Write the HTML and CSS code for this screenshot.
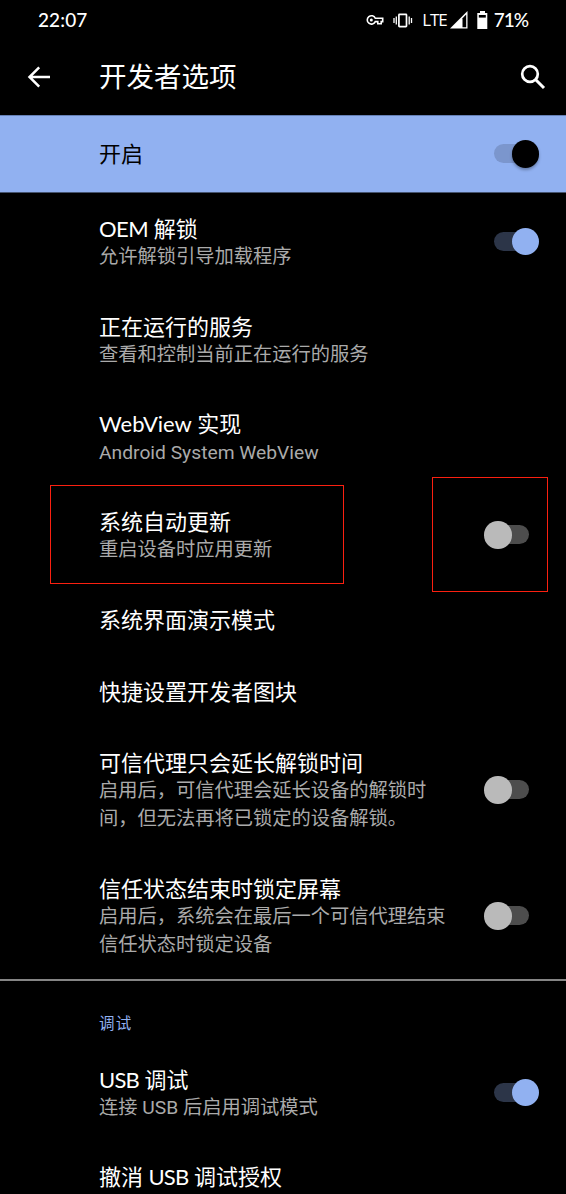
FILE: index.html
```html
<!DOCTYPE html>
<html lang="zh-CN">
<head>
<meta charset="utf-8">
<title>开发者选项</title>
<link rel="stylesheet" href="styles.css">
</head>
<body>
<div class="screen">
  <header class="status">
    <span class="clock">22:07</span>
    <div class="status-icons">
      <svg class="key" width="18" height="12" viewBox="0 0 18 12"><path d="M9.3 4.2A4.2 4.2 0 1 0 9.3 7.6H11.8V9.7H15.2V7.6H16.7V4.2Z" fill="none" stroke="#fff" stroke-width="1.6"/><circle cx="5.3" cy="5.9" r="1.5" fill="#fff"/></svg>
      <svg class="vibrate" width="20" height="15" viewBox="0 0 20 15"><rect x="5.9" y="1.4" width="7.6" height="12.2" rx=".6" fill="none" stroke="#fff" stroke-width="1.7"/><path d="M1 5V10M3.3 3.5V11.5M16.2 3.5V11.5M18.5 5V10" stroke="#fff" stroke-width="1.3"/></svg>
      <span class="lte">LTE</span>
      <svg class="signal" width="18" height="18" viewBox="0 0 18 18"><path d="M0 17.5L17.5 0V17.5Z" fill="#fff"/><path d="M12.5 7.2L16.2 3.5V16.2H12.5Z" fill="#000"/></svg>
      <svg class="battery" width="11" height="18" viewBox="0 0 11 18"><path d="M3 0H8V2H10.3V18H.3V2H3Z" fill="#fff"/><path d="M1.8 4H8.8V6.6H1.8Z" fill="#000"/></svg>
      <span class="percent">71%</span>
    </div>
  </header>
  <div class="toolbar">
    <svg class="back" width="24" height="24" viewBox="0 0 24 24"><path d="M23 12H3M12.2 2.3L2.5 12L12.2 21.7" fill="none" stroke="#fff" stroke-width="2.5"/></svg>
    <h1>开发者选项</h1>
    <svg class="search" width="26" height="26" viewBox="0 0 26 26"><circle cx="10" cy="10" r="7.8" fill="none" stroke="#fff" stroke-width="2.7"/><path d="M15.5 15.5L24 24" stroke="#fff" stroke-width="3"/></svg>
  </div>
  <div class="banner"><span class="title">开启</span><i class="switch on dark"></i></div>
  <main>
    <div class="row"><div class="text"><div class="title"><span class="oem">OEM</span> 解锁</div><div class="summary">允许解锁引导加载程序</div></div><i class="switch on"></i></div>
    <div class="row"><div class="text"><div class="title">正在运行的服务</div><div class="summary">查看和控制当前正在运行的服务</div></div></div>
    <div class="row"><div class="text"><div class="title"><span class="webview">WebView</span> 实现</div><div class="summary">Android System WebView</div></div></div>
    <div class="row"><div class="text"><div class="title">系统自动更新</div><div class="summary">重启设备时应用更新</div></div><i class="switch"></i></div>
    <div class="row"><div class="title">系统界面演示模式</div></div>
    <div class="row"><div class="title">快捷设置开发者图块</div></div>
    <div class="row"><div class="text"><div class="title">可信代理只会延长解锁时间</div><div class="summary">启用后，可信代理会延长设备的解锁时<br>间，但无法再将已锁定的设备解锁。</div></div><i class="switch"></i></div>
    <div class="row"><div class="text"><div class="title">信任状态结束时锁定屏幕</div><div class="summary">启用后，系统会在最后一个可信代理结束<br>信任状态时锁定设备</div></div><i class="switch"></i></div>
    <h2 class="category">调试</h2>
    <div class="row"><div class="text"><div class="title"><span class="usb">USB</span> 调试</div><div class="summary">连接 USB 后启用调试模式</div></div><i class="switch on"></i></div>
    <div class="row"><div class="title">撤消 <span class="usb">USB</span> 调试授权</div></div>
  </main>
  <div class="mark mark-text"></div>
  <div class="mark mark-switch"></div>
</div>
</body>
</html>
```
FILE: styles.css
```css
* { box-sizing: border-box; }
body { margin: 0; background: #000; }
.screen {
  position: relative;
  width: 566px;
  height: 1194px;
  overflow: hidden;
  background: #000;
  color: #fff;
  font-family: Roboto, "Noto Sans CJK SC", sans-serif;
}
.status {
  display: flex;
  justify-content: space-between;
  align-items: center;
  height: 40px;
  padding: 0 38px;
}
.clock { font: 500 19px/40px Lato, sans-serif; letter-spacing: .1px; }
.status-icons { display: flex; align-items: center; height: 40px; }
.vibrate { margin-left: 9px; }
.lte { margin-left: 9px; font: 17px/40px "Open Sans", sans-serif; letter-spacing: -1.1px; }
.signal { margin-left: 3px; }
.battery { margin-left: 9px; }
.percent { margin-left: 6px; font: 500 19px/40px Lato, sans-serif; letter-spacing: -1px; }
.toolbar { display: flex; align-items: center; height: 75px; padding: 0 20px 0 27px; }
.toolbar h1 { flex: 1; margin: 0 0 0 48px; font-size: 27.5px; line-height: 40px; font-weight: 400; }
.back, .search { margin-bottom: 1px; }
.banner {
  display: flex;
  justify-content: space-between;
  align-items: center;
  height: 78px;
  padding: 0 27px 0 99px;
  background: #91b1f1;
  border-top: 1px solid #6580b5;
  border-bottom: 1px solid #46546f;
  color: #000;
}
.banner .title { padding-top: 2px; }
main { padding-top: 1px; }
.row { display: flex; justify-content: space-between; align-items: center; padding: 21.8px 27px 21.8px 99px; }
.title { font-size: 22px; line-height: 28px; white-space: nowrap; }
.summary { margin: -.8px 0 -1px; font-size: 19.25px; line-height: 28px; color: #aaa; white-space: nowrap; }
.oem, .webview, .usb { font-family: Lato, sans-serif; line-height: 1; }
.oem { letter-spacing: -.5px; }
.usb { letter-spacing: -.8px; }
.switch { position: relative; flex: none; width: 55px; height: 28px; }
.row .switch { margin-bottom: 2px; }
.switch::before {
  content: "";
  position: absolute;
  left: 10px;
  top: 4px;
  width: 35px;
  height: 19px;
  border-radius: 10px;
  background: #4d4d4d;
}
.switch::after {
  content: "";
  position: absolute;
  left: 0;
  top: 0;
  width: 27.5px;
  height: 27.5px;
  border-radius: 50%;
  background: #bababa;
}
.switch.on::before { background: #2c3548; }
.switch.on::after { left: 27.5px; background: #91b1f1; }
.switch.dark::before { background: #7b96cd; }
.switch.dark::after { background: #000; box-shadow: 0 2px 3px rgba(0, 0, 0, .3); }
.category {
  height: 66px;
  margin: -1.2px 0 0;
  padding: 0 0 0 99px;
  border-top: 2px solid #858585;
  font-size: 15.5px;
  line-height: 86px;
  font-weight: 400;
  letter-spacing: 1.2px;
  color: #91b1f1;
}
.mark { position: absolute; border: 1px solid #fb2010; }
.mark-text { left: 50px; top: 485px; width: 294px; height: 99px; }
.mark-switch { left: 432px; top: 477px; width: 116px; height: 115px; }
```
